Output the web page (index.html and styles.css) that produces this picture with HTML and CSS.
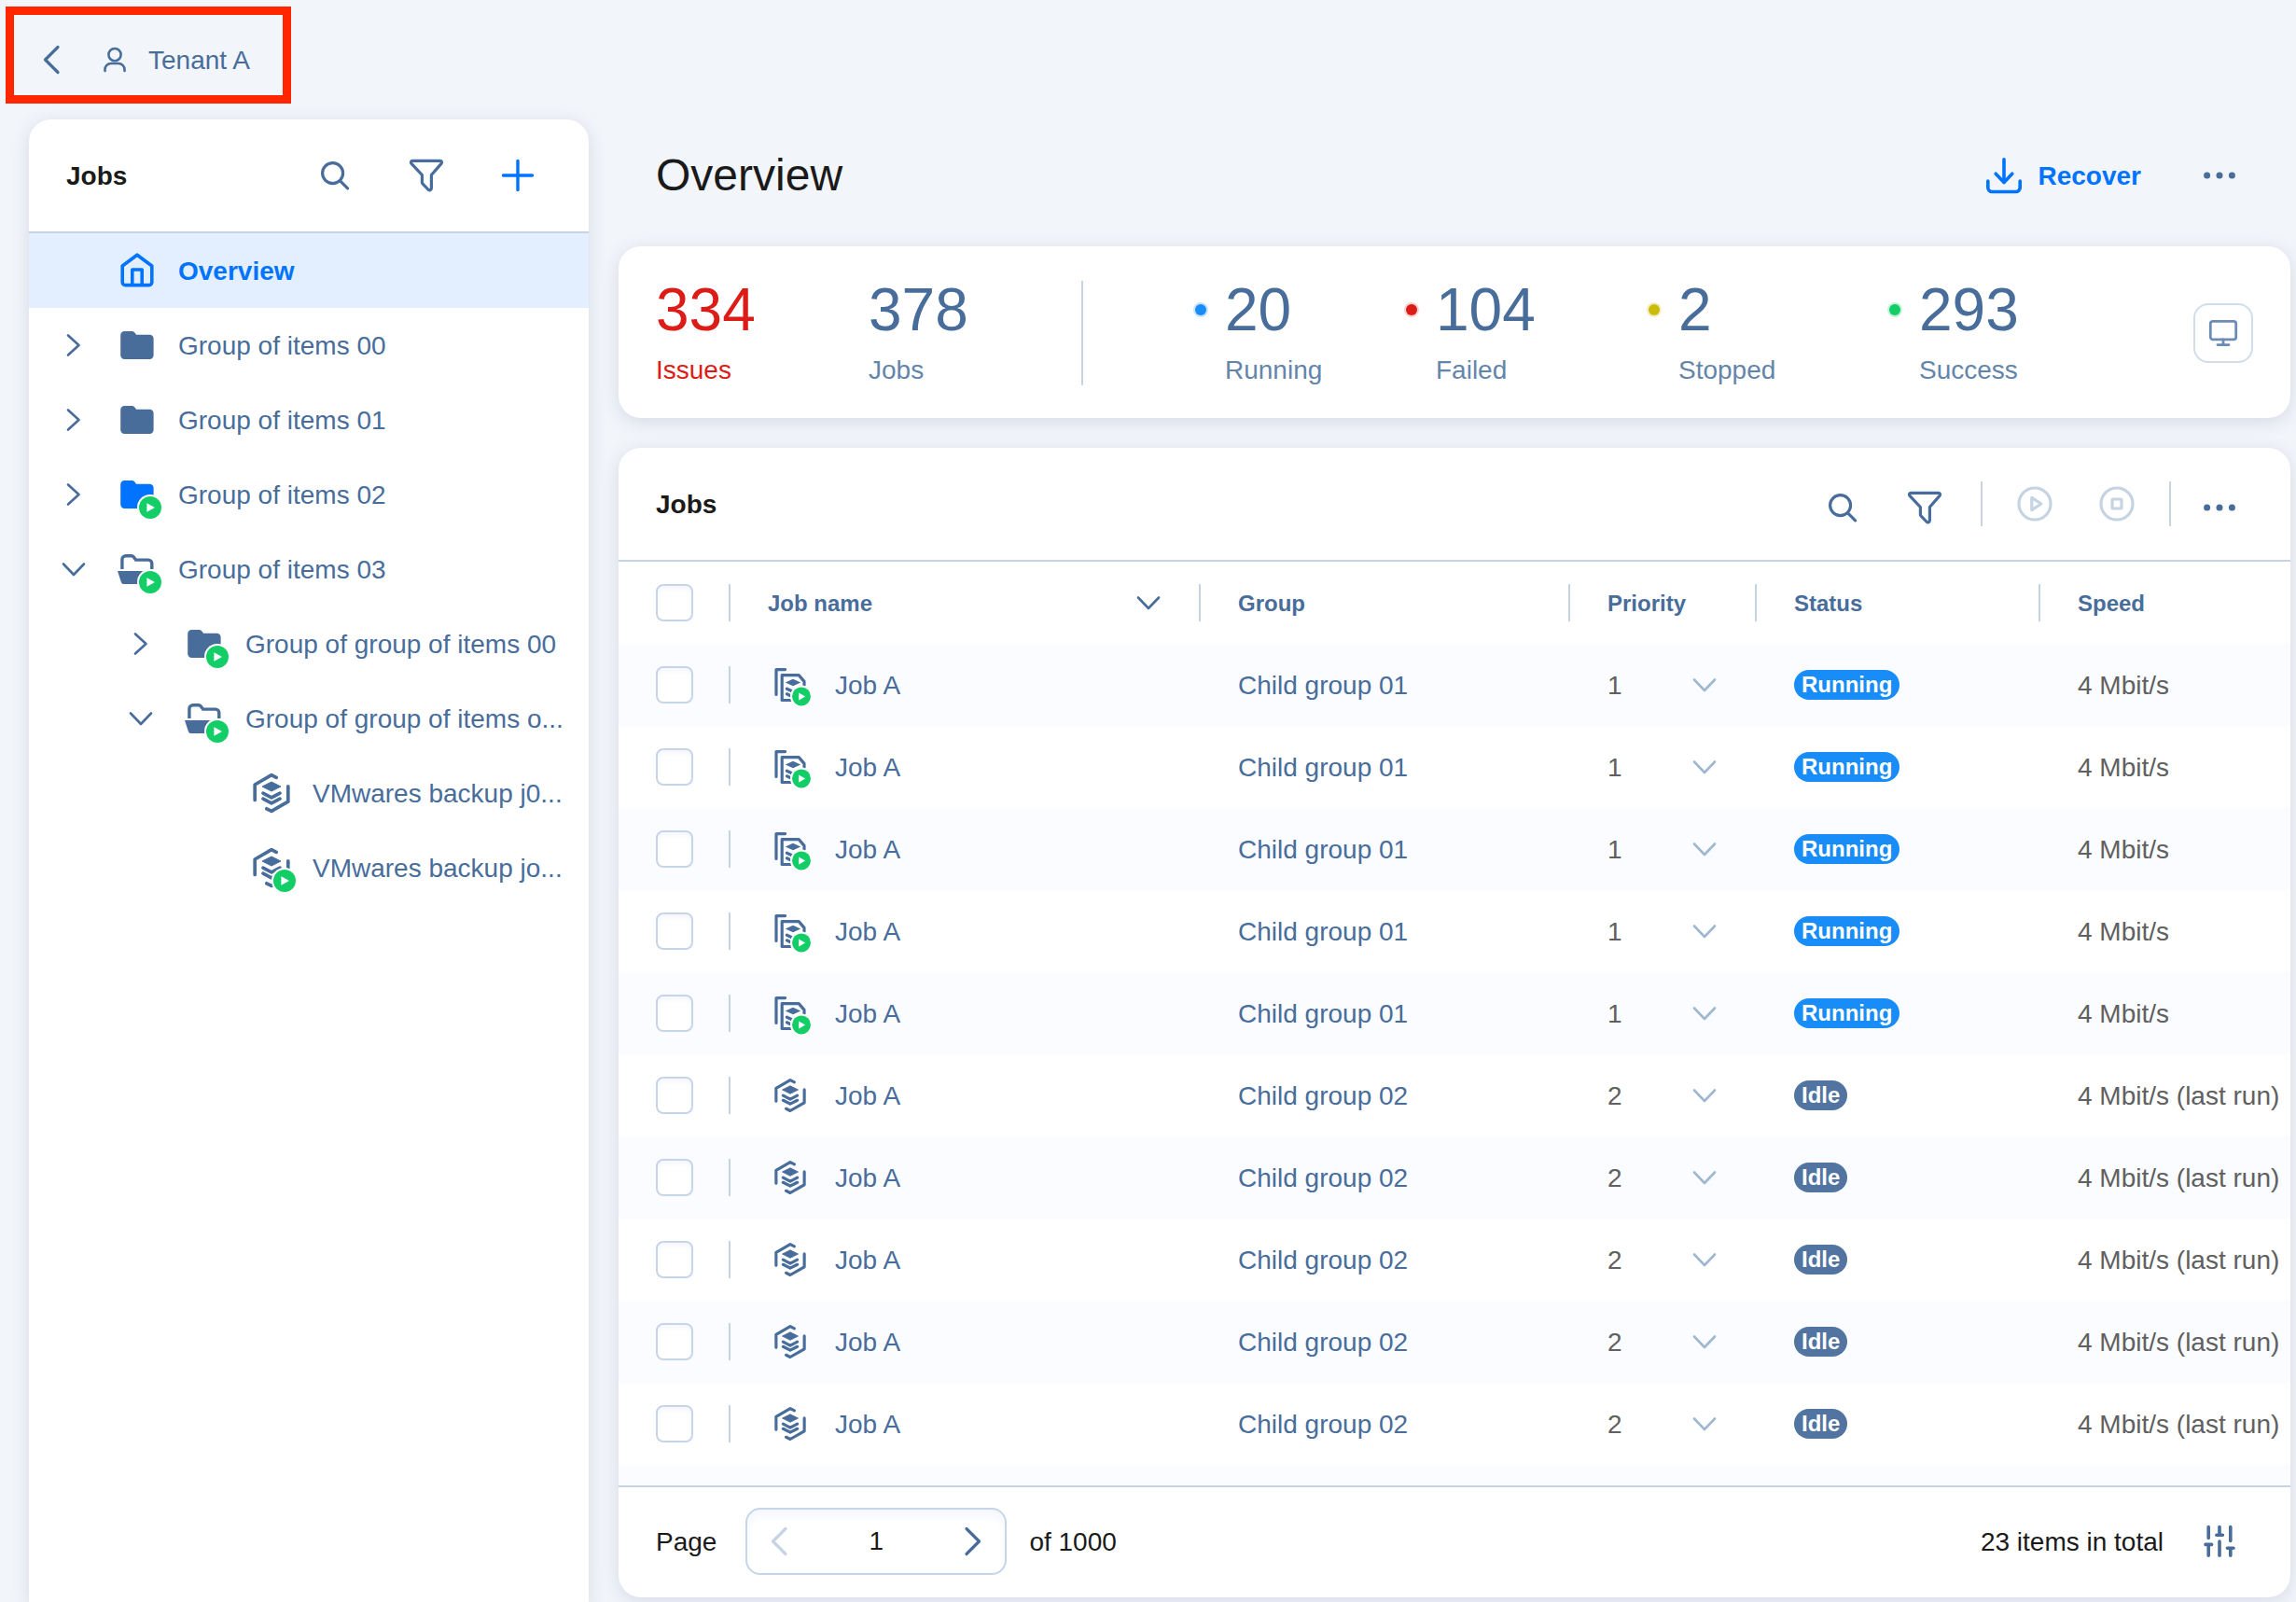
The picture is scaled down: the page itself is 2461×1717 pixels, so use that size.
FILE: index.html
```
<!DOCTYPE html>
<html lang="en">
<head>
    <meta charset="UTF-8">
    <meta name="viewport" content="width=device-width, initial-scale=1.0">
    <title>Jobs Overview</title>
    <link rel="stylesheet" href="styles.css">
</head>
<body>
    <!-- icon set, every symbol is drawn on a 40x40 box -->
    <svg class="sprite" aria-hidden="true">
        <symbol id="i-left" viewBox="0 0 40 40"><path class="line" stroke-width="3.2" d="M27 6.5 13.5 20 27 33.5"/></symbol>
        <symbol id="i-next" viewBox="0 0 40 40"><path class="line" stroke-width="3.2" d="M13 6.5 26.5 20 13 33.5"/></symbol>
        <symbol id="i-right" viewBox="0 0 40 40"><path class="line" stroke-width="2.6" d="M14 9.5 25.5 20 14 30.5"/></symbol>
        <symbol id="i-down" viewBox="0 0 40 40"><path class="line" stroke-width="2.6" d="M9 14.5 20 26l11-11.5"/></symbol>
        <symbol id="i-user" viewBox="0 0 40 40"><g class="line" stroke-width="2.6"><circle cx="20" cy="14.6" r="6.6"/><path d="M9.5 32v-1.5a6.5 6.5 0 0 1 6.5-6.5h8a6.5 6.5 0 0 1 6.5 6.5V32"/></g></symbol>
        <symbol id="i-search" viewBox="0 0 40 40"><g class="line" stroke-width="3.2"><circle cx="17.6" cy="17.6" r="11"/><path d="m25.6 25.8 8 8"/></g></symbol>
        <symbol id="i-filter" viewBox="0 0 40 40"><path class="line" stroke-width="3.2" d="M5.2 4.4h29.6c1.6 0 2.3 1.8 1.2 3L25.4 19.5v14.2c0 1.9-2.4 2.8-3.6 1.3l-5.6-5.8c-.5-.6-.8-1.3-.8-2v-7.7L4 7.4c-1.1-1.2-.4-3 1.2-3z"/></symbol>
        <symbol id="i-plus" viewBox="0 0 40 40"><path class="line" stroke-width="3.4" d="M20 4.5v31M4.5 20h31"/></symbol>
        <symbol id="i-home" viewBox="0 0 40 40"><path class="line" stroke-width="3.6" d="M20 3.2 35.8 15v17.6a3 3 0 0 1-3 3H7.2a3 3 0 0 1-3-3V15zM14.8 35.5V19h10.4v16.5"/></symbol>
        <symbol id="i-download" viewBox="0 0 40 40"><path class="line" stroke-width="3.6" d="M2.8 26v7a4.5 4.5 0 0 0 4.5 4.5h25.4a4.5 4.5 0 0 0 4.5-4.5v-7M20 2.8v25M11.2 18.2l8.8 9.2 8.8-9.2"/></symbol>
        <symbol id="i-dots" viewBox="0 0 40 40"><g fill="currentColor"><circle cx="6.6" cy="20" r="3.5"/><circle cx="20" cy="20" r="3.5"/><circle cx="33.4" cy="20" r="3.5"/></g></symbol>
        <symbol id="i-monitor" viewBox="0 0 40 40"><g class="line" stroke-width="2.8"><rect x="6.3" y="7.4" width="27.4" height="19.4" rx="2.6"/><path d="M20 27v5.5M14 32.6h12"/></g></symbol>
        <symbol id="i-start" viewBox="0 0 40 40"><g class="line" stroke-width="3.2"><circle cx="20" cy="20" r="17"/><path d="m16.8 13.4 10 6.6-10 6.6z"/></g></symbol>
        <symbol id="i-stop" viewBox="0 0 40 40"><g class="line" stroke-width="3.2"><circle cx="20" cy="20" r="17"/><rect x="15" y="15" width="10" height="10" rx="1"/></g></symbol>
        <symbol id="i-sliders" viewBox="0 0 40 40"><path class="line" stroke-width="3.6" d="M8.2 4.6v11.8M5 23.4h6.6M8.2 23.4v11.8M20 4.6v8.6M16.8 13.2h6.6M20 20v15.2M31.8 4.6v14.8M28.4 27.2H35M31.8 27.2v8"/></symbol>

        <symbol id="i-badge" viewBox="0 0 40 40" overflow="visible">
            <circle class="ring" cx="34" cy="34" r="14"/>
            <circle class="go" cx="34" cy="34" r="12"/>
            <path fill="#fff" d="m30.4 29.2 8.6 4.8-8.6 4.8z"/>
        </symbol>
        <symbol id="i-folder" viewBox="0 0 40 40"><path fill="currentColor" d="M6.4 5h8.4a3 3 0 0 1 2.6 1.5l1.6 2.3h14.4a4.2 4.2 0 0 1 4.2 4.2v17.8a4.2 4.2 0 0 1-4.2 4.2h-27a4.2 4.2 0 0 1-4.2-4.2V9.2A4.2 4.2 0 0 1 6.4 5z"/></symbol>
        <symbol id="i-folder-open" viewBox="0 0 40 40" overflow="visible">
            <path fill="none" stroke="currentColor" stroke-width="3.4" d="M3.9 20V9.7a4 4 0 0 1 4-4h6a3 3 0 0 1 2.4 1.2l2.3 3.2h13.2a4 4 0 0 1 4 4V20"/>
            <path fill="currentColor" d="M-1 22h41.6l-3.4 12a2.6 2.6 0 0 1-2.5 2H5.4a2.6 2.6 0 0 1-2.5-2z"/>
        </symbol>
        <symbol id="i-vm" viewBox="0 0 40 40" overflow="visible">
            <path class="line" stroke-width="3.7" d="M25.2 3.4 20 .7 2.2 11v16.4M14.8 36.8l5.2 2.6 17.8-10.2V12.8M11 20.2l9 4.6 9-4.6M11 26.2l9 4.6 9-4.6"/>
            <path fill="currentColor" stroke="currentColor" stroke-linejoin="round" d="m10 13 10-5 10 5-10 5z"/>
        </symbol>
        <symbol id="i-copy" viewBox="0 0 40 40" overflow="visible">
            <path class="line" stroke-width="3.2" d="M14.6 3.6H5v26.8"/>
            <path class="line" stroke-width="3.2" d="M21 36.5h-9.8V9.6h18l5.8 6.8v4M16.4 24.2l6.6 3 4-1.8M16.4 29.8l4 2"/>
            <path fill="currentColor" d="m14.8 17.5 8.2-3.7 8.2 3.7-8.2 3.7z"/>
            <circle class="ring" cx="32" cy="32.4" r="12"/>
            <circle class="go" cx="32" cy="32.4" r="10"/>
            <path fill="#fff" d="m29.2 28.4 7 4-7 4z"/>
        </symbol>
    </svg>

    <header class="topbar">
        <button class="icon-btn" type="button" aria-label="Back"><svg class="icon"><use href="#i-left"/></svg></button>
        <div class="tenant">
            <svg class="icon"><use href="#i-user"/></svg>
            <span>Tenant A</span>
        </div>
        <div class="highlight"></div>
    </header>

    <div class="layout">
        <aside class="sidebar">
            <div class="sidebar-head">
                <h2>Jobs</h2>
                <div class="sidebar-tools">
                    <button class="icon-btn" type="button" aria-label="Search"><svg class="icon"><use href="#i-search"/></svg></button>
                    <button class="icon-btn" type="button" aria-label="Filter"><svg class="icon"><use href="#i-filter"/></svg></button>
                    <button class="icon-btn accent" type="button" aria-label="Add"><svg class="icon"><use href="#i-plus"/></svg></button>
                </div>
            </div>
            <nav class="tree">
                <div class="tree-row active">
                    <span class="toggle"></span>
                    <a href="#"><svg class="icon"><use href="#i-home"/></svg><span>Overview</span></a>
                </div>
                <div class="tree-row">
                    <button class="icon-btn toggle" type="button" aria-label="Expand"><svg class="icon"><use href="#i-right"/></svg></button>
                    <a href="#"><svg class="icon"><use href="#i-folder"/></svg><span>Group of items 00</span></a>
                </div>
                <div class="tree-row">
                    <button class="icon-btn toggle" type="button" aria-label="Expand"><svg class="icon"><use href="#i-right"/></svg></button>
                    <a href="#"><svg class="icon"><use href="#i-folder"/></svg><span>Group of items 01</span></a>
                </div>
                <div class="tree-row">
                    <button class="icon-btn toggle" type="button" aria-label="Expand"><svg class="icon"><use href="#i-right"/></svg></button>
                    <a href="#"><svg class="icon accent"><use href="#i-folder"/><use href="#i-badge"/></svg><span>Group of items 02</span></a>
                </div>
                <div class="tree-row">
                    <button class="icon-btn toggle" type="button" aria-label="Collapse"><svg class="icon"><use href="#i-down"/></svg></button>
                    <a href="#"><svg class="icon"><use href="#i-folder-open"/><use href="#i-badge"/></svg><span>Group of items 03</span></a>
                </div>
                <div class="tree-row level-2">
                    <button class="icon-btn toggle" type="button" aria-label="Expand"><svg class="icon"><use href="#i-right"/></svg></button>
                    <a href="#"><svg class="icon"><use href="#i-folder"/><use href="#i-badge"/></svg><span>Group of group of items 00</span></a>
                </div>
                <div class="tree-row level-2">
                    <button class="icon-btn toggle" type="button" aria-label="Collapse"><svg class="icon"><use href="#i-down"/></svg></button>
                    <a href="#"><svg class="icon"><use href="#i-folder-open"/><use href="#i-badge"/></svg><span>Group of group of items o...</span></a>
                </div>
                <div class="tree-row level-3">
                    <span class="toggle"></span>
                    <a href="#"><svg class="icon"><use href="#i-vm"/></svg><span>VMwares backup j0...</span></a>
                </div>
                <div class="tree-row level-3">
                    <span class="toggle"></span>
                    <a href="#"><svg class="icon"><use href="#i-vm"/><use href="#i-badge"/></svg><span>VMwares backup jo...</span></a>
                </div>
            </nav>
        </aside>

        <main class="content">
            <div class="page-head">
                <h1>Overview</h1>
                <div class="page-actions">
                    <button class="recover" type="button"><svg class="icon"><use href="#i-download"/></svg>Recover</button>
                    <button class="icon-btn" type="button" aria-label="More"><svg class="icon"><use href="#i-dots"/></svg></button>
                </div>
            </div>

            <section class="card stats">
                <div class="stat issues"><strong>334</strong><span>Issues</span></div>
                <div class="stat"><strong>378</strong><span>Jobs</span></div>
                <div class="stat-divider"></div>
                <div class="stat dot dot-running"><strong>20</strong><span>Running</span></div>
                <div class="stat dot dot-failed"><strong>104</strong><span>Failed</span></div>
                <div class="stat dot dot-stopped"><strong>2</strong><span>Stopped</span></div>
                <div class="stat dot dot-success"><strong>293</strong><span>Success</span></div>
                <button class="monitor-btn" type="button" aria-label="Monitor"><svg class="icon"><use href="#i-monitor"/></svg></button>
            </section>

            <section class="card jobs">
                <div class="jobs-head">
                    <h2>Jobs</h2>
                    <div class="toolbar">
                        <button class="icon-btn" type="button" aria-label="Search jobs"><svg class="icon"><use href="#i-search"/></svg></button>
                        <button class="icon-btn" type="button" aria-label="Filter jobs"><svg class="icon"><use href="#i-filter"/></svg></button>
                        <div class="toolbar-group">
                            <button class="icon-btn" type="button" aria-label="Start" disabled><svg class="icon"><use href="#i-start"/></svg></button>
                            <button class="icon-btn" type="button" aria-label="Stop" disabled><svg class="icon"><use href="#i-stop"/></svg></button>
                        </div>
                        <button class="icon-btn" type="button" aria-label="More actions"><svg class="icon"><use href="#i-dots"/></svg></button>
                    </div>
                </div>

                <table class="jobs-table">
                    <colgroup>
                        <col class="col-check">
                        <col class="col-name">
                        <col class="col-group">
                        <col class="col-priority">
                        <col class="col-status">
                        <col class="col-speed">
                    </colgroup>
                    <thead>
                        <tr>
                            <th><input type="checkbox" aria-label="Select all"></th>
                            <th><div class="sort">Job name <button class="icon-btn" type="button" aria-label="Sort"><svg class="icon"><use href="#i-down"/></svg></button></div></th>
                            <th>Group</th>
                            <th>Priority</th>
                            <th>Status</th>
                            <th>Speed</th>
                        </tr>
                    </thead>
                    <tbody id="job-rows">
                        <!-- JavaScript will populate the rows here -->
                    </tbody>
                </table>
                <div class="table-rest"></div>

                <footer class="jobs-foot">
                    <label for="page">Page</label>
                    <div class="pager">
                        <button class="icon-btn" type="button" aria-label="Previous" disabled><svg class="icon"><use href="#i-left"/></svg></button>
                        <input type="text" id="page" value="1">
                        <button class="icon-btn" type="button" aria-label="Next"><svg class="icon"><use href="#i-next"/></svg></button>
                    </div>
                    <span>of 1000</span>
                    <span class="total">23 items in total</span>
                    <button class="icon-btn" type="button" aria-label="Table settings"><svg class="icon"><use href="#i-sliders"/></svg></button>
                </footer>
            </section>
        </main>
    </div>

    <script>
        const running = { icon: 'copy', group: 'Child group 01', priority: 1, status: 'Running', speed: '4 Mbit/s' };
        const idle = { icon: 'vm', group: 'Child group 02', priority: 2, status: 'Idle', speed: '4 Mbit/s (last run)' };
        const jobs = [...Array(5).fill(running), ...Array(5).fill(idle)];

        document.getElementById('job-rows').innerHTML = jobs.map((job, i) => `
            <tr>
                <td><input type="checkbox" aria-label="Select job ${i + 1}"></td>
                <td><a class="job" href="#"><span class="job-icon"><svg class="icon ${job.icon}"><use href="#i-${job.icon}"/></svg></span>Job A</a></td>
                <td><a href="#">${job.group}</a></td>
                <td>
                    <div class="priority">
                        <select aria-label="Priority of job ${i + 1}"><option>${job.priority}</option></select>
                        <svg class="icon"><use href="#i-down"/></svg>
                    </div>
                </td>
                <td><span class="status ${job.status.toLowerCase()}">${job.status}</span></td>
                <td>${job.speed}</td>
            </tr>`).join('');
    </script>
</body>
</html>
```
FILE: styles.css
```
:root {
    --blue: #486d9b;
    --accent: #0073ff;
    --line: #c5d3e2;
    --field: #c6d5e8;
    --text: #1a1a1a;
}
* {
    box-sizing: border-box;
}
body {
    margin: 0;
    min-height: 100vh;
    display: flex;
    flex-direction: column;
    background: #f2f5fa;
    color: var(--blue);
    font-family: "Liberation Sans", Arial, sans-serif;
    font-size: 28px;
    line-height: 33px;
}
h1, h2 {
    margin: 0;
    color: var(--text);
}
h1 {
    font-size: 48px;
    line-height: 56px;
    font-weight: normal;
}
h2 {
    font-size: 28px;
}
a {
    color: inherit;
    text-decoration: none;
}
button, input, select {
    font: inherit;
    color: inherit;
    margin: 0;
    padding: 0;
    border: 0;
    background: none;
}

/* icons */
.sprite {
    position: absolute;
    width: 0;
    height: 0;
}
.icon {
    display: block;
    flex: none;
    width: 40px;
    height: 40px;
    overflow: visible;
}
.line {
    fill: none;
    stroke: currentColor;
    stroke-linecap: round;
    stroke-linejoin: round;
}
.ring {
    fill: #fff;
}
.go {
    fill: #13ce66;
}
.icon-btn {
    display: block;
    flex: none;
    width: 40px;
    height: 40px;
    color: var(--blue);
}
.icon-btn:disabled {
    color: var(--line);
}
.accent {
    color: var(--accent);
}

/* top bar */
.topbar {
    position: relative;
    height: 128px;
    padding: 0 35px;
    display: flex;
    align-items: center;
    gap: 28px;
}
.tenant {
    display: flex;
    align-items: center;
    gap: 16px;
}
.highlight {
    position: absolute;
    left: 6px;
    top: 7px;
    width: 306px;
    height: 104px;
    border: 9px solid #ff2600;
    pointer-events: none;
}

.layout {
    flex: 1;
    display: flex;
    gap: 32px;
    padding: 0 6px 0 31px;
}

/* sidebar */
.sidebar {
    flex: none;
    width: 600px;
    background: #fff;
    border-radius: 24px 24px 0 0;
    box-shadow: 0 4px 20px rgba(50, 60, 120, 0.14);
}
.sidebar-head {
    display: flex;
    align-items: center;
    justify-content: space-between;
    height: 122px;
    padding: 0 56px 0 40px;
    border-bottom: 2px solid var(--line);
}
.sidebar-tools {
    display: flex;
    gap: 58px;
}
.tree-row {
    display: flex;
    align-items: center;
    gap: 28px;
    height: 80px;
    padding-left: 28px;
}
.tree-row.level-2 {
    padding-left: 100px;
}
.tree-row.level-3 {
    padding-left: 172px;
}
.tree-row a {
    display: flex;
    align-items: center;
    gap: 24px;
    white-space: nowrap;
}
.tree-row.active {
    background: #e3effe;
    color: var(--accent);
    font-weight: bold;
}
.toggle {
    flex: none;
    width: 40px;
}

/* main column */
.content {
    flex: 1;
    min-width: 0;
    padding-bottom: 5px;
}
.page-head {
    display: flex;
    align-items: center;
    justify-content: space-between;
    height: 120px;
    margin-bottom: 16px;
    padding: 0 56px 0 40px;
}
.page-actions {
    display: flex;
    align-items: center;
    gap: 64px;
}
.recover {
    display: flex;
    align-items: center;
    gap: 16px;
    color: var(--accent);
    font-weight: bold;
}
.card {
    background: #fff;
    border-radius: 24px;
    box-shadow: 0 4px 20px rgba(50, 60, 120, 0.14);
}

/* statistics */
.stats {
    display: grid;
    grid-template-columns: 228px 228px 120px 226px 260px 258px 1fr auto;
    align-items: center;
    margin-bottom: 32px;
    padding: 36px 40px 35px;
}
.stat {
    display: flex;
    flex-direction: column;
    gap: 16px;
    color: #6485ab;
}
.stat strong {
    color: var(--blue);
    font-size: 64px;
    line-height: 64px;
    font-weight: normal;
}
.stat.issues, .stat.issues strong {
    color: #dc1c17;
}
.stat-divider {
    width: 2px;
    height: 112px;
    background: var(--line);
}
.stat.dot {
    display: grid;
    grid-template-columns: 16px auto;
    justify-content: start;
    column-gap: 18px;
}
.stat.dot::before {
    content: "";
    align-self: center;
    justify-self: center;
    width: 12px;
    height: 12px;
    border-radius: 50%;
}
.stat.dot span {
    grid-column: 2;
}
.dot-running::before {
    background: #188cf7;
    box-shadow: 0 0 0 2px #c9e3fd;
}
.dot-failed::before {
    background: #dc1c17;
    box-shadow: 0 0 0 2px #f8d2d1;
}
.dot-stopped::before {
    background: #cbbb0b;
    box-shadow: 0 0 0 2px #f4efc6;
}
.dot-success::before {
    background: #13ce66;
    box-shadow: 0 0 0 2px #c4f3d9;
}
.monitor-btn {
    display: flex;
    align-items: center;
    justify-content: center;
    width: 64px;
    height: 64px;
    border: 2px solid #d0ddea;
    border-radius: 16px;
    color: #6d8cb5;
}

/* jobs card */
.jobs-head {
    display: flex;
    align-items: center;
    justify-content: space-between;
    height: 122px;
    padding: 0 56px 0 40px;
    border-bottom: 2px solid var(--line);
}
.toolbar {
    display: flex;
    align-items: flex-end;
    gap: 48px;
}
.toolbar > .icon-btn:last-child {
    margin-left: -16px;
}
.toolbar-group {
    display: flex;
    align-items: center;
    gap: 48px;
    height: 48px;
    margin-left: -8px;
    padding: 0 36px;
    border: solid var(--line);
    border-width: 0 2px;
}
.jobs-table {
    width: 100%;
    table-layout: fixed;
    border-collapse: collapse;
}
.col-check { width: 118px; }
.col-group { width: 396px; }
.col-priority { width: 200px; }
.col-status { width: 304px; }
.col-speed { width: 270px; }
.jobs-table tr {
    height: 88px;
}
.jobs-table tbody tr:nth-child(odd), .table-rest {
    background-color: #fafcff;
}
.table-rest {
    height: 22px;
}
th, td {
    padding: 0 0 0 42px;
    text-align: left;
    vertical-align: middle;
    white-space: nowrap;
    color: #606060;
}
th {
    color: var(--blue);
    font-size: 24px;
}
td a {
    color: var(--blue);
}
th:first-child, td:first-child {
    padding-left: 40px;
}
/* short column dividers */
th:not(:first-child), td:nth-child(2) {
    background: linear-gradient(var(--line), var(--line)) left center / 2px 40px no-repeat;
}
.sort {
    display: flex;
    align-items: center;
    justify-content: space-between;
    padding-right: 34px;
}
input[type="checkbox"] {
    appearance: none;
    display: block;
    width: 40px;
    height: 40px;
    border: 2px solid var(--field);
    border-radius: 8px;
    background: #fff;
    box-shadow: inset 0 4px 4px #f6f8fd;
}
.job {
    display: flex;
    align-items: center;
    gap: 24px;
}
.job-icon {
    display: flex;
    justify-content: center;
    width: 48px;
}
.job-icon .vm {
    width: 34px;
    height: 34px;
}
.priority {
    display: grid;
    align-items: center;
    width: 124px;
}
.priority select {
    grid-area: 1 / 1;
    appearance: none;
    height: 40px;
}
.priority .icon {
    grid-area: 1 / 1;
    justify-self: end;
    color: #9fb7d1;
    pointer-events: none;
}
.status {
    display: block;
    width: fit-content;
    padding: 0 8px;
    border-radius: 16px;
    color: #fff;
    font-size: 24px;
    line-height: 32px;
    font-weight: bold;
}
.status.running {
    background: #188cf7;
}
.status.idle {
    background: #5174a0;
}

/* footer */
.jobs-foot {
    display: flex;
    align-items: center;
    height: 120px;
    padding: 0 56px 2px 40px;
    border-top: 2px solid var(--line);
    color: var(--text);
}
.pager {
    display: flex;
    align-items: center;
    justify-content: space-between;
    width: 280px;
    height: 72px;
    margin: 0 24px 0 31px;
    padding: 0 14px;
    border: 2px solid var(--field);
    border-radius: 16px;
    box-shadow: inset 0 8px 8px #f6f8fd;
}
.pager input {
    width: 120px;
    height: 40px;
    text-align: center;
}
.total {
    margin-left: auto;
    margin-right: 40px;
}
```
